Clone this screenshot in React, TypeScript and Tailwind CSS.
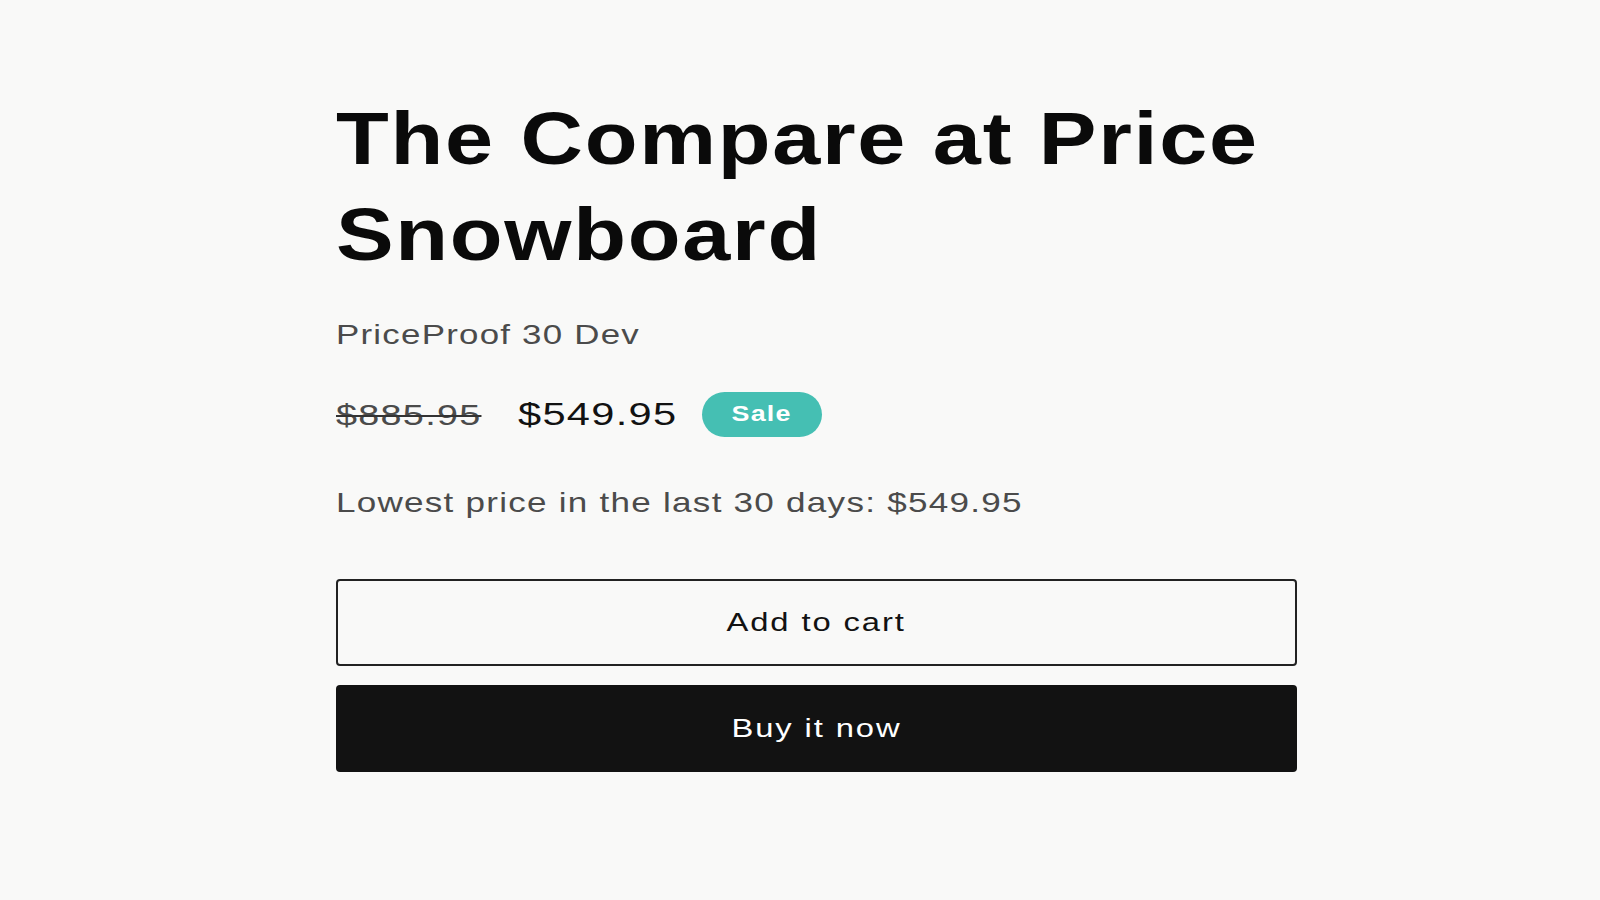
export default function App() {
  return (
    <div className="min-h-[900px] w-full bg-[#f9f9f8] font-['Liberation_Sans',Arial,sans-serif]">
      <div className="pl-[336px] pt-[90px]">
        <div className="w-[960px] flex flex-col">
          <h1 className="origin-left scale-x-[1.152] text-[75px] leading-[96px] font-bold tracking-[1.5px] text-[#0a0a0a]">
            The Compare at Price
            <br />
            Snowboard
          </h1>
          <p className="mt-[33px] origin-left scale-x-[1.245] text-[28px] leading-[40px] tracking-[1px] text-[#4b4b4b]">
            PriceProof 30 Dev
          </p>
          <div className="mt-[37px] flex items-center h-[45px]">
            <span className="w-[182px] shrink-0">
              <s className="inline-block origin-left scale-x-[1.26] text-[30px] leading-[45px] tracking-[1px] text-[#4b4b4b] decoration-[#333] decoration-2">
                $885.95
              </s>
            </span>
            <span className="w-[184px] shrink-0">
              <span className="inline-block origin-left scale-x-[1.3] text-[32px] leading-[45px] tracking-[1px] text-[#121212]">
                $549.95
              </span>
            </span>
            <span className="flex h-[45px] w-[120px] items-center justify-center rounded-full bg-[#45bfb3] pb-[3px] text-[22px] font-bold text-white">
              <span className="inline-block scale-x-[1.22] tracking-[1px]">Sale</span>
            </span>
          </div>
          <p className="mt-[46px] origin-left scale-x-[1.252] text-[28px] leading-[40px] tracking-[1px] text-[#4b4b4b]">
            Lowest price in the last 30 days: $549.95
          </p>
          <button className="mt-[56px] flex h-[87px] w-[961px] items-center justify-center rounded-[4px] border-2 border-[#222] bg-[#f9f9f8] text-[26px] text-[#121212]">
            <span className="inline-block scale-x-[1.26] tracking-[1.5px]">Add to cart</span>
          </button>
          <button className="mt-[19px] flex h-[87px] w-[961px] items-center justify-center rounded-[4px] bg-[#121212] text-[26px] text-white">
            <span className="inline-block scale-x-[1.26] tracking-[1.5px]">Buy it now</span>
          </button>
        </div>
      </div>
    </div>
  );
}
